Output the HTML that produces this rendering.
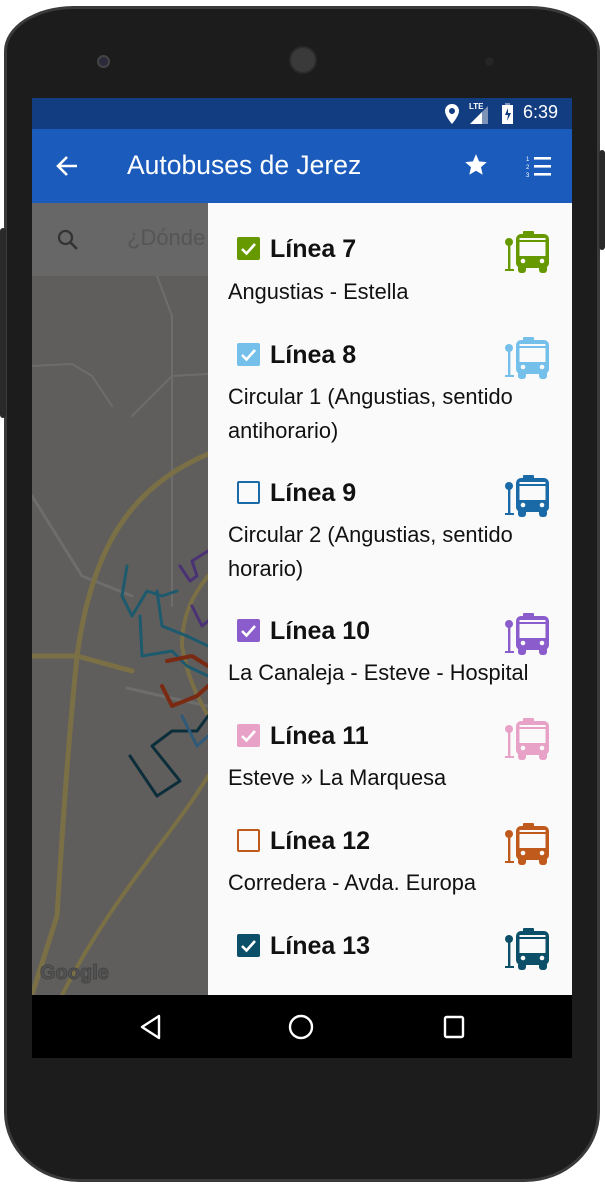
<!DOCTYPE html>
<html><head><meta charset="utf-8">
<style>
*{margin:0;padding:0;box-sizing:border-box}
body{width:605px;height:1188px;background:#fff;position:relative;overflow:hidden;font-family:"Liberation Sans",Roboto,sans-serif}
.phone{position:absolute;left:4px;top:6px;width:596px;height:1176px;background:#1c1c1c;border-radius:70px 70px 75px 75px / 45px 45px 70px 70px;border:3px solid #3a3a3a}
.btnL{position:absolute;left:0;top:228px;width:6px;height:190px;background:#2a2a2a;border-radius:3px}
.btnR{position:absolute;right:0;top:150px;width:6px;height:100px;background:#2a2a2a;border-radius:3px}
.screen{position:absolute;left:32px;top:98px;width:540px;height:960px;overflow:hidden;background:#5f5e5c}
.status{position:absolute;left:0;top:0;width:540px;height:31px;background:#123d80;color:#fff}
.appbar{position:absolute;left:0;top:31px;width:540px;height:74px;background:#1a5bbb;color:#fff}
.title{position:absolute;left:95px;top:21px;font-size:26.5px;font-weight:normal}
.search{position:absolute;left:0;top:105px;width:176px;height:73px;background:#676767}
.drawer{position:absolute;left:176px;top:105px;width:364px;height:792px;background:#fafafa}
.nav{position:absolute;left:0;top:897px;width:540px;height:63px;background:#000}
.item{position:absolute;left:0;width:364px}
.hd{position:absolute;left:62px;font-size:25px;font-weight:bold;color:#111;line-height:30px}
.cb{position:absolute;left:29px;width:23px;height:23px;border-radius:2px}
.sub{position:absolute;left:20px;font-size:21.8px;color:#111;line-height:34px;white-space:nowrap}
.bus{position:absolute;left:296px;width:46px;height:42px}
</style></head><body>
<div class="phone"></div>
<div class="btnL"></div><div class="btnR"></div>
<div style="position:absolute;left:97px;top:55px;width:13px;height:13px;border-radius:50%;background:#2a2a3a;border:2px solid #444"></div>
<div style="position:absolute;left:289px;top:46px;width:28px;height:28px;border-radius:50%;background:#3a3a3a;border:2px solid #2a2a2a"></div>
<div style="position:absolute;left:485px;top:57px;width:9px;height:9px;border-radius:50%;background:#252525"></div>
<div class="screen">
 <div class="status">
  <svg style="position:absolute;left:413px;top:6px" width="14" height="20" viewBox="0 0 14 20"><path d="M7 0C3 0 0 3 0 7c0 5 7 13 7 13s7-8 7-13c0-4-3-7-7-7zm0 10a3 3 0 110-6 3 3 0 010 6z" fill="#fff"/></svg>
  <div style="position:absolute;left:437px;top:4px;font-size:8px;font-weight:bold">LTE</div>
  <svg style="position:absolute;left:438px;top:8px" width="18" height="18"><polygon points="18,0 18,18 0,18" fill="#7e93b8"/><polygon points="12,6 12,18 0,18" fill="#fff"/></svg>
  <svg style="position:absolute;left:470px;top:5px" width="11" height="21"><rect x="3" y="0" width="5" height="2" fill="#7e93b8"/><rect x="0" y="2" width="11" height="19" fill="#fff"/><path d="M6 5 3 12h3l-1 6 4-8H6z" fill="#123d80"/></svg>
  <div style="position:absolute;left:491px;top:4px;font-size:18px">6:39</div>
 </div>
 <div class="appbar">
  <svg style="position:absolute;left:24px;top:26px" width="22" height="22" viewBox="0 0 22 22"><path d="M21 11H3M11 2 2 11l9 9" stroke="#fff" stroke-width="2.6" fill="none"/></svg>
  <div class="title">Autobuses de Jerez</div>
  <svg style="position:absolute;left:431px;top:23px" width="26" height="26" viewBox="0 0 24 24"><path d="M12 17.3l6.2 3.7-1.6-7 5.4-4.7-7.2-.6L12 2 9.2 8.7 2 9.3l5.4 4.7-1.6 7z" fill="#fff"/></svg>
  <svg style="position:absolute;left:494px;top:26px" width="26" height="22" viewBox="0 0 26 22"><g fill="#fff"><rect x="8" y="2" width="17" height="2.6"/><rect x="8" y="10" width="17" height="2.6"/><rect x="8" y="18" width="17" height="2.6"/></g><text x="0" y="6" font-size="6" fill="#fff" font-family="Liberation Sans">1</text><text x="0" y="14" font-size="6" fill="#fff" font-family="Liberation Sans">2</text><text x="0" y="22" font-size="6" fill="#fff" font-family="Liberation Sans">3</text></svg>
 </div>
 <svg style="position:absolute;left:0;top:178px" width="176" height="719" viewBox="0 0 176 719">
  <g fill="none" stroke-linecap="round" stroke-linejoin="round">
   <path d="M125 0 L140 40 L140 330 M0 90 L40 88 L60 100 L80 130 M100 140 L140 100 L176 98" stroke="#6d6d6b" stroke-width="2"/>
   <path d="M0 220 L50 300 L100 320 M95 412 L130 420 L176 430" stroke="#6d6d6b" stroke-width="3"/>
   <path d="M176 178 C100 210 60 270 45 380 C35 480 30 560 25 640 L0 719" stroke="#7a6f45" stroke-width="5"/>
   <path d="M0 380 L45 380 L100 395" stroke="#7a6f45" stroke-width="5"/>
   <path d="M176 300 C160 320 150 340 150 370 C155 400 165 420 176 440" stroke="#7a6f45" stroke-width="4"/>
   <path d="M176 500 C140 560 80 620 30 719" stroke="#7a6f45" stroke-width="4"/>
   <path d="M160 330 L170 350 L176 345 M148 290 L158 305 L165 300 L160 285 L176 275" stroke="#4a3275" stroke-width="3"/>
   <path d="M95 290 L90 320 L100 340 L115 315 L130 320 L145 315 M108 340 L110 380 L140 375 L155 390 L176 400 M125 315 L130 350 L155 360 L176 370" stroke="#1d5a6e" stroke-width="3"/>
   <path d="M135 385 L160 380 L176 390 M130 410 L140 430 L165 420 L176 410" stroke="#7a2a12" stroke-width="4"/>
   <path d="M98 480 L125 520 L148 505 L120 470 L140 455 L165 455 L176 440" stroke="#0c2e3a" stroke-width="3"/>
   <path d="M150 440 L165 470 L176 460" stroke="#2e5a78" stroke-width="3"/>
  </g>
  <text x="8" y="703" font-size="20" font-weight="bold" fill="#555" stroke="#444" stroke-width="1" font-family="Liberation Sans">Google</text>
 </svg>
 <div class="search">
  <svg style="position:absolute;left:25px;top:26px" width="22" height="22" viewBox="0 0 22 22"><circle cx="8.5" cy="8.5" r="6.5" stroke="#333" stroke-width="2.3" fill="none"/><path d="M13 13l7 7" stroke="#333" stroke-width="2.6"/></svg>
  <div style="position:absolute;left:95px;top:22px;font-size:22px;color:#555;white-space:nowrap">¿Dónde</div>
 </div>
 <div class="drawer">
  <div class="item" style="top:0">
   <div class="cb" style="top:34px;background:#669900"><svg width="23" height="23"><path d="M5 12l4.5 4.5L18 7" stroke="#fff" stroke-width="2.6" fill="none"/></svg></div>
   <div class="hd" style="top:31px">Línea 7</div>
   <div class="sub" style="top:72px">Angustias - Estella</div>
   <svg class="bus" style="top:28px;color:#669900" viewBox="0 0 46 42"><g fill="currentColor"><circle cx="5" cy="11" r="4"/><rect x="4" y="11" width="2.4" height="28"/><rect x="1" y="38" width="9" height="2"/><rect x="19" y="0" width="11" height="4" rx="1"/><rect x="12" y="3" width="33" height="34" rx="5"/><rect x="14" y="34" width="8" height="8" rx="3"/><rect x="35" y="34" width="8" height="8" rx="3"/></g><rect x="15.5" y="7" width="26" height="2" fill="#fafafa"/><rect x="15.5" y="11" width="26" height="14" fill="#fafafa"/><circle cx="19" cy="30" r="2.3" fill="#fafafa"/><circle cx="38" cy="30" r="2.3" fill="#fafafa"/></svg>
  </div>
  <div class="item" style="top:106px">
   <div class="cb" style="top:34px;background:#74c0ea"><svg width="23" height="23"><path d="M5 12l4.5 4.5L18 7" stroke="#fff" stroke-width="2.6" fill="none"/></svg></div>
   <div class="hd" style="top:31px">Línea 8</div>
   <div class="sub" style="top:71px">Circular 1 (Angustias, sentido<br>antihorario)</div>
   <svg class="bus" style="top:28px;color:#74c0ea" viewBox="0 0 46 42"><g fill="currentColor"><circle cx="5" cy="11" r="4"/><rect x="4" y="11" width="2.4" height="28"/><rect x="1" y="38" width="9" height="2"/><rect x="19" y="0" width="11" height="4" rx="1"/><rect x="12" y="3" width="33" height="34" rx="5"/><rect x="14" y="34" width="8" height="8" rx="3"/><rect x="35" y="34" width="8" height="8" rx="3"/></g><rect x="15.5" y="7" width="26" height="2" fill="#fafafa"/><rect x="15.5" y="11" width="26" height="14" fill="#fafafa"/><circle cx="19" cy="30" r="2.3" fill="#fafafa"/><circle cx="38" cy="30" r="2.3" fill="#fafafa"/></svg>
  </div>
  <div class="item" style="top:244px">
   <div class="cb" style="top:34px;border:2.5px solid #1a6aa8"></div>
   <div class="hd" style="top:31px">Línea 9</div>
   <div class="sub" style="top:71px">Circular 2 (Angustias, sentido<br>horario)</div>
   <svg class="bus" style="top:28px;color:#1a6aa8" viewBox="0 0 46 42"><g fill="currentColor"><circle cx="5" cy="11" r="4"/><rect x="4" y="11" width="2.4" height="28"/><rect x="1" y="38" width="9" height="2"/><rect x="19" y="0" width="11" height="4" rx="1"/><rect x="12" y="3" width="33" height="34" rx="5"/><rect x="14" y="34" width="8" height="8" rx="3"/><rect x="35" y="34" width="8" height="8" rx="3"/></g><rect x="15.5" y="7" width="26" height="2" fill="#fafafa"/><rect x="15.5" y="11" width="26" height="14" fill="#fafafa"/><circle cx="19" cy="30" r="2.3" fill="#fafafa"/><circle cx="38" cy="30" r="2.3" fill="#fafafa"/></svg>
  </div>
  <div class="item" style="top:382px">
   <div class="cb" style="top:34px;background:#8a5ccc"><svg width="23" height="23"><path d="M5 12l4.5 4.5L18 7" stroke="#fff" stroke-width="2.6" fill="none"/></svg></div>
   <div class="hd" style="top:31px">Línea 10</div>
   <div class="sub" style="top:71px">La Canaleja - Esteve - Hospital</div>
   <svg class="bus" style="top:28px;color:#8a5ccc" viewBox="0 0 46 42"><g fill="currentColor"><circle cx="5" cy="11" r="4"/><rect x="4" y="11" width="2.4" height="28"/><rect x="1" y="38" width="9" height="2"/><rect x="19" y="0" width="11" height="4" rx="1"/><rect x="12" y="3" width="33" height="34" rx="5"/><rect x="14" y="34" width="8" height="8" rx="3"/><rect x="35" y="34" width="8" height="8" rx="3"/></g><rect x="15.5" y="7" width="26" height="2" fill="#fafafa"/><rect x="15.5" y="11" width="26" height="14" fill="#fafafa"/><circle cx="19" cy="30" r="2.3" fill="#fafafa"/><circle cx="38" cy="30" r="2.3" fill="#fafafa"/></svg>
  </div>
  <div class="item" style="top:487px">
   <div class="cb" style="top:34px;background:#e8a2c8"><svg width="23" height="23"><path d="M5 12l4.5 4.5L18 7" stroke="#fff" stroke-width="2.6" fill="none"/></svg></div>
   <div class="hd" style="top:31px">Línea 11</div>
   <div class="sub" style="top:71px">Esteve » La Marquesa</div>
   <svg class="bus" style="top:28px;color:#e8a2c8" viewBox="0 0 46 42"><g fill="currentColor"><circle cx="5" cy="11" r="4"/><rect x="4" y="11" width="2.4" height="28"/><rect x="1" y="38" width="9" height="2"/><rect x="19" y="0" width="11" height="4" rx="1"/><rect x="12" y="3" width="33" height="34" rx="5"/><rect x="14" y="34" width="8" height="8" rx="3"/><rect x="35" y="34" width="8" height="8" rx="3"/></g><rect x="15.5" y="7" width="26" height="2" fill="#fafafa"/><rect x="15.5" y="11" width="26" height="14" fill="#fafafa"/><circle cx="19" cy="30" r="2.3" fill="#fafafa"/><circle cx="38" cy="30" r="2.3" fill="#fafafa"/></svg>
  </div>
  <div class="item" style="top:592px">
   <div class="cb" style="top:34px;border:2.5px solid #c05a1c"></div>
   <div class="hd" style="top:31px">Línea 12</div>
   <div class="sub" style="top:71px">Corredera - Avda. Europa</div>
   <svg class="bus" style="top:28px;color:#c05a1c" viewBox="0 0 46 42"><g fill="currentColor"><circle cx="5" cy="11" r="4"/><rect x="4" y="11" width="2.4" height="28"/><rect x="1" y="38" width="9" height="2"/><rect x="19" y="0" width="11" height="4" rx="1"/><rect x="12" y="3" width="33" height="34" rx="5"/><rect x="14" y="34" width="8" height="8" rx="3"/><rect x="35" y="34" width="8" height="8" rx="3"/></g><rect x="15.5" y="7" width="26" height="2" fill="#fafafa"/><rect x="15.5" y="11" width="26" height="14" fill="#fafafa"/><circle cx="19" cy="30" r="2.3" fill="#fafafa"/><circle cx="38" cy="30" r="2.3" fill="#fafafa"/></svg>
  </div>
  <div class="item" style="top:697px">
   <div class="cb" style="top:34px;background:#0b5068"><svg width="23" height="23"><path d="M5 12l4.5 4.5L18 7" stroke="#fff" stroke-width="2.6" fill="none"/></svg></div>
   <div class="hd" style="top:31px">Línea 13</div>
   <svg class="bus" style="top:28px;color:#0b5068" viewBox="0 0 46 42"><g fill="currentColor"><circle cx="5" cy="11" r="4"/><rect x="4" y="11" width="2.4" height="28"/><rect x="1" y="38" width="9" height="2"/><rect x="19" y="0" width="11" height="4" rx="1"/><rect x="12" y="3" width="33" height="34" rx="5"/><rect x="14" y="34" width="8" height="8" rx="3"/><rect x="35" y="34" width="8" height="8" rx="3"/></g><rect x="15.5" y="7" width="26" height="2" fill="#fafafa"/><rect x="15.5" y="11" width="26" height="14" fill="#fafafa"/><circle cx="19" cy="30" r="2.3" fill="#fafafa"/><circle cx="38" cy="30" r="2.3" fill="#fafafa"/></svg>
  </div>
 </div>
 <div class="nav">
  <svg style="position:absolute;left:107px;top:19px" width="24" height="26"><path d="M20 2 L3 13 L20 24 Z" stroke="#fff" stroke-width="2.4" fill="none" stroke-linejoin="round"/></svg>
  <svg style="position:absolute;left:256px;top:19px" width="26" height="26"><circle cx="13" cy="13" r="11" stroke="#fff" stroke-width="2.4" fill="none"/></svg>
  <svg style="position:absolute;left:411px;top:20px" width="22" height="24"><rect x="2" y="2" width="18" height="20" rx="1.5" stroke="#fff" stroke-width="2.4" fill="none"/></svg>
 </div>
</div>
</body></html>
